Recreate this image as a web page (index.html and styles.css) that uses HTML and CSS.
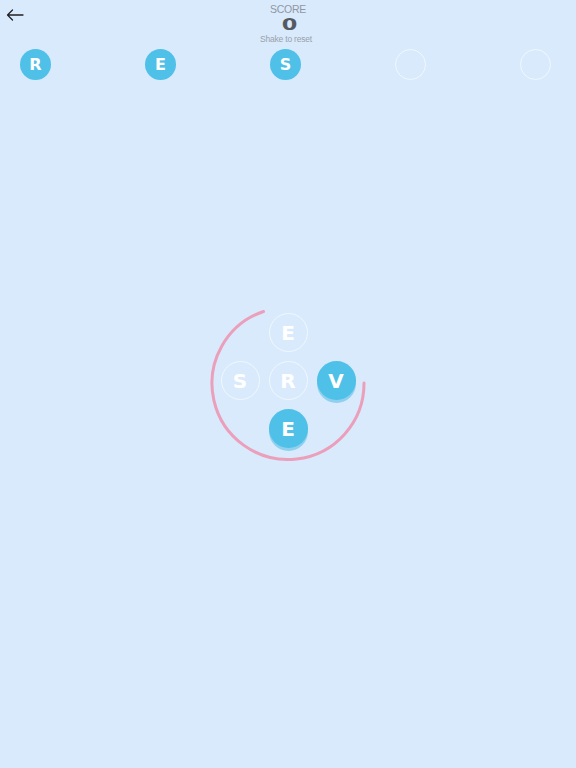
FILE: index.html
```html
<!DOCTYPE html>
<html>
<head>
<meta charset="utf-8">
<link rel="stylesheet" href="styles.css">
</head>
<body>
<header class="top">
  <div class="back">
    <svg width="18" height="12" viewBox="0 0 18 12"><path d="M17 6H1.5M6.5 1L1.5 6l5 5" fill="none" stroke="#222" stroke-width="1.3" stroke-linecap="round" stroke-linejoin="round"/></svg>
  </div>
  <div class="score">
    <div class="score-label">SCORE</div>
    <div class="score-value">0</div>
    <div class="score-hint">Shake to reset</div>
  </div>
  <div></div>
</header>
<div class="slots">
  <div class="slot filled">R</div>
  <div class="slot filled">E</div>
  <div class="slot filled">S</div>
  <div class="slot"></div>
  <div class="slot"></div>
</div>
<div class="cluster">
  <svg class="arc" width="135" height="135" viewBox="0 0 135 135"><path d="M42.5 -1.5 A76 76 0 1 0 143 70" fill="none" stroke="#eb9fba" stroke-width="3" stroke-linecap="round"/></svg>
  <div class="cell"></div>
  <div class="tile">E</div>
  <div class="cell"></div>
  <div class="tile">S</div>
  <div class="tile">R</div>
  <div class="tile on">V</div>
  <div class="cell"></div>
  <div class="tile on">E</div>
  <div class="cell"></div>
</div>
</body>
</html>
```
FILE: styles.css
```css
html, body {
  margin: 0;
  padding: 0;
  background: #d9eafd;
  width: 576px;
  height: 768px;
  overflow: hidden;
  font-family: "Liberation Sans", Arial, sans-serif;
}
.top {
  display: grid;
  grid-template-columns: 60px 1fr 60px;
  height: 46px;
}
.back {
  padding: 9px 0 0 6px;
}
.back svg { display: block; }
.score {
  display: flex;
  flex-direction: column;
  align-items: center;
  padding-top: 4px;
}
.score-label {
  font-size: 10.5px;
  color: #9097a0;
  line-height: 11px;
  height: 11px;
  letter-spacing: -0.3px;
}
.score-value {
  font-family: "DejaVu Sans", sans-serif;
  font-weight: bold;
  font-size: 16px;
  line-height: 13px;
  height: 13px;
  margin-top: 3px;
  color: #555a60;
  transform: scaleX(1.4);
  margin-left: 3px;
}
.score-hint {
  font-size: 8.5px;
  color: #9aa1aa;
  line-height: 10px;
  margin-top: 3px;
  margin-right: 4px;
  letter-spacing: -0.2px;
}
.slots {
  display: flex;
  justify-content: space-between;
  padding: 3px 25px 0 20px;
}
.slot {
  width: 31px;
  height: 31px;
  border-radius: 50%;
  box-sizing: border-box;
  border: 1px solid rgba(255,255,255,0.6);
  display: flex;
  align-items: center;
  justify-content: center;
  color: #fff;
  font-family: "DejaVu Sans", sans-serif;
  font-weight: bold;
  font-size: 16px;
}
.slot.filled {
  background: #4fc0e8;
  border: none;
}
.cluster {
  position: relative;
  width: 135px;
  margin: 233px auto 0;
  display: grid;
  grid-template-columns: repeat(3, 39px);
  grid-auto-rows: 39px;
  gap: 9px;
}
.arc {
  position: absolute;
  left: 0;
  top: 0;
  overflow: visible;
}
.tile {
  position: relative;
  border-radius: 50%;
  box-sizing: border-box;
  border: 1px solid rgba(255,255,255,0.6);
  display: flex;
  align-items: center;
  justify-content: center;
  color: #fff;
  font-family: "DejaVu Sans", sans-serif;
  font-weight: bold;
  font-size: 20px;
}
.tile.on {
  background: #4fc0e8;
  border: none;
  box-shadow: 0 3px 0 #8fd0ee;
}
```
